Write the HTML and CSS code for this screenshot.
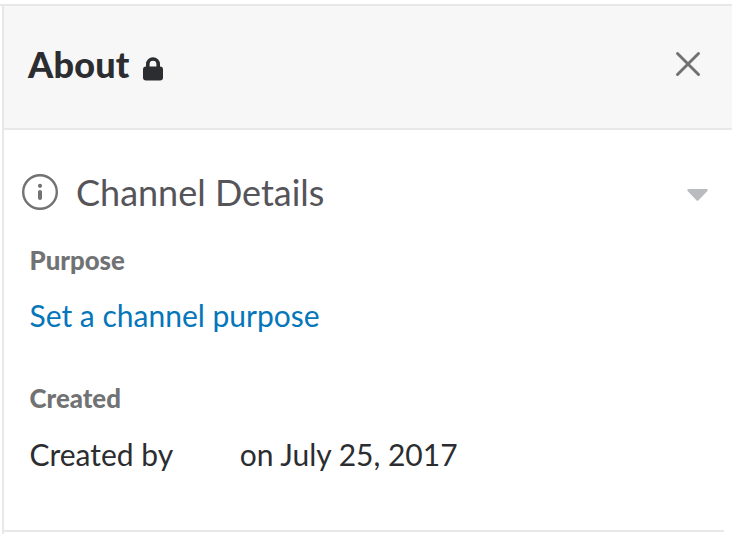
FILE: index.html
```html
<!DOCTYPE html>
<html lang="en">
<head>
    <meta charset="UTF-8">
    <meta name="viewport" content="width=device-width, initial-scale=1.0">
    <title>About</title>
    <link rel="stylesheet" href="styles.css">
</head>
<body>
    <aside class="panel">
        <header class="panel-header">
            <h1>About</h1>
            <svg class="lock-icon" width="20" height="24" viewBox="0 0 20 24">
                <path d="M4.8 11V7.2a5.2 5.2 0 0 1 10.4 0V11" fill="none" stroke="#2c2d30" stroke-width="3.6"/>
                <rect x="0" y="9.5" width="20" height="14" rx="3" fill="#2c2d30"/>
            </svg>
            <button class="close-btn" aria-label="Close">
                <svg width="26" height="26" viewBox="0 0 26 26">
                    <path d="M2.5 2.5l21 21M23.5 2.5l-21 21" fill="none" stroke="#717274" stroke-width="3" stroke-linecap="round"/>
                </svg>
            </button>
        </header>

        <!-- Channel details -->
        <section class="details">
            <div class="details-header">
                <svg class="info-icon" width="36" height="36" viewBox="0 0 36 36">
                    <circle cx="18" cy="18" r="16.8" fill="none" stroke="#717274" stroke-width="2.4"/>
                    <circle cx="18" cy="11.8" r="2.1" fill="#717274"/>
                    <path d="M18 18v6" stroke="#717274" stroke-width="4" stroke-linecap="round"/>
                </svg>
                <h2>Channel Details</h2>
                <svg class="caret" width="21" height="12" viewBox="0 0 20 12" preserveAspectRatio="none">
                    <path d="M1.5 0h17q2 .4 .9 2L11 11.2q-1 1.2-2 0L.6 2Q-.5.4 1.5 0z" fill="#babbbf"/>
                </svg>
            </div>
            <div class="details-body">
                <h3>Purpose</h3>
                <p><a href="#">Set a channel purpose</a></p>
                <h3>Created</h3>
                <p>Created by <span class="creator"></span>on July 25, 2017</p>
            </div>
        </section>
    </aside>
</body>
</html>
```

FILE: styles.css
```css
* {
    box-sizing: border-box;
    margin: 0;
    padding: 0;
}

body {
    font-family: Lato, sans-serif;
    background-color: #ffffff;
    color: #2c2d30;
    padding-top: 4px;
    overflow: hidden;
}

.panel {
    height: 530px;
    border-top: 2px solid #e8e8e8;
    padding-left: 2px;
}

.panel-header {
    display: flex;
    align-items: center;
    height: 124px;
    padding: 0 31px 0 24px;
    background-color: #f7f7f7;
    border-left: 2px solid #e8e8e8;
    border-bottom: 2px solid #e8e8e8;
}

.panel-header h1 {
    font-size: 36px;
    font-weight: 900;
    line-height: 44px;
    letter-spacing: 0.2px;
    margin-top: -6px;
}

.lock-icon {
    margin: 4px 0 0 13.5px;
}

.close-btn {
    margin: -6px 0 0 auto;
    border: none;
    background: none;
    line-height: 0;
}

.details {
    height: 404px;
    padding-top: 39px;
    border-left: 2px solid #e8e8e8;
}

/* the divider stops short of the right edge */
.details::after {
    content: "";
    display: block;
    height: 2px;
    margin: 31px 8px 0 0;
    background-color: #e8e8e8;
}

.details-header {
    display: flex;
    align-items: center;
    height: 46px;
    padding: 0 24px 0 18px;
}

.details-header h2 {
    margin-left: 18px;
    font-size: 36px;
    font-weight: 400;
    color: #555459;
}

.caret {
    margin: 6px 0 0 auto;
}

.details-body {
    height: 284px;
    padding: 26px 25.5px 0;
}

.details-body h3 {
    font-size: 25.8px;
    font-weight: 900;
    line-height: 38px;
    color: #717274;
}

.details-body p {
    font-size: 30px;
    line-height: 44px;
    margin: 14px 0 42px;
}

.details-body p:last-child {
    margin-top: 15px;
}

.details-body a {
    color: #0576b9;
    text-decoration: none;
}

.creator {
    display: inline-block;
    width: 59.5px;
}
```
